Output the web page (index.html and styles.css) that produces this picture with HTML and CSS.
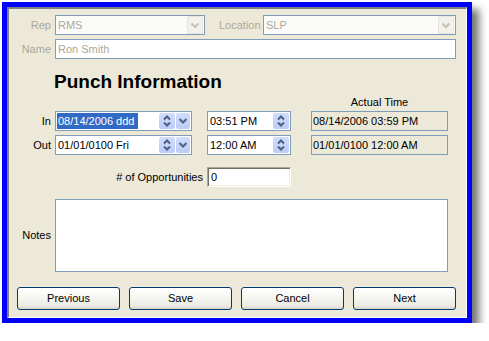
FILE: index.html
```html
<!DOCTYPE html>
<html>
<head>
<meta charset="utf-8">
<link rel="stylesheet" href="styles.css">
</head>
<body>
<div class="window">
  <div class="inner">
    <div class="row">
      <span class="lbl dis">Rep</span>
      <div class="combo rep"><span class="val">RMS</span><span class="dd-dis"><svg width="16" height="18" viewBox="0 0 16 18"><polyline points="4.5,7.5 8,11 11.5,7.5" fill="none" stroke="#C5C2B2" stroke-width="2"/></svg></span></div>
      <span class="lbl loc-lbl dis">Location</span>
      <div class="combo loc"><span class="val">SLP</span><span class="dd-dis"><svg width="16" height="18" viewBox="0 0 16 18"><polyline points="4.5,7.5 8,11 11.5,7.5" fill="none" stroke="#C5C2B2" stroke-width="2"/></svg></span></div>
    </div>
    <div class="row row2">
      <span class="lbl dis">Name</span>
      <div class="textbox name">Ron Smith</div>
    </div>
    <h1 class="heading">Punch Information</h1>
    <div class="prow head">
      <div class="actual-head">Actual Time</div>
    </div>
    <div class="prow">
      <span class="lbl">In</span>
      <div class="cell"><div class="field date"><span class="txt"><span class="sel">08/14/2006 ddd</span></span><span class="spin"><svg width="16" height="16" viewBox="0 0 16 16"><polyline points="5,6.5 8,3.5 11,6.5" fill="none" stroke="#4D6185" stroke-width="2"/><polyline points="5,9.5 8,12.5 11,9.5" fill="none" stroke="#4D6185" stroke-width="2"/></svg></span><span class="dd"><svg width="14" height="16" viewBox="0 0 14 16"><polyline points="3.5,6 7,9.5 10.5,6" fill="none" stroke="#4D6185" stroke-width="2"/></svg></span></div></div>
      <div class="cell"><div class="field time"><span class="txt">03:51 PM</span><span class="spin"><svg width="16" height="16" viewBox="0 0 16 16"><polyline points="5,6.5 8,3.5 11,6.5" fill="none" stroke="#4D6185" stroke-width="2"/><polyline points="5,9.5 8,12.5 11,9.5" fill="none" stroke="#4D6185" stroke-width="2"/></svg></span></div></div>
      <div class="ro">08/14/2006 03:59 PM</div>
    </div>
    <div class="prow out">
      <span class="lbl">Out</span>
      <div class="cell"><div class="field date"><span class="txt">01/01/0100 Fri</span><span class="spin"><svg width="16" height="16" viewBox="0 0 16 16"><polyline points="5,6.5 8,3.5 11,6.5" fill="none" stroke="#4D6185" stroke-width="2"/><polyline points="5,9.5 8,12.5 11,9.5" fill="none" stroke="#4D6185" stroke-width="2"/></svg></span><span class="dd"><svg width="14" height="16" viewBox="0 0 14 16"><polyline points="3.5,6 7,9.5 10.5,6" fill="none" stroke="#4D6185" stroke-width="2"/></svg></span></div></div>
      <div class="cell"><div class="field time"><span class="txt">12:00 AM</span><span class="spin"><svg width="16" height="16" viewBox="0 0 16 16"><polyline points="5,6.5 8,3.5 11,6.5" fill="none" stroke="#4D6185" stroke-width="2"/><polyline points="5,9.5 8,12.5 11,9.5" fill="none" stroke="#4D6185" stroke-width="2"/></svg></span></div></div>
      <div class="ro">01/01/0100 12:00 AM</div>
    </div>
    <div class="prow opps">
      <span class="lbl opps-lbl">#&nbsp;of Opportunities</span>
      <div class="cell"><div class="sunken">0</div></div>
    </div>
    <div class="prow notes">
      <span class="lbl notes-lbl">Notes</span>
      <div class="notes-box"></div>
    </div>
    <div class="buttons">
      <div class="btn">Previous</div>
      <div class="btn">Save</div>
      <div class="btn">Cancel</div>
      <div class="btn">Next</div>
    </div>
  </div>
</div>
</body>
</html>
```

FILE: styles.css
```css
html, body {
  margin: 0;
  padding: 0;
  background: #ffffff;
}
body {
  font-family: "Liberation Sans", Arial, sans-serif;
  font-size: 11px;
  color: #000;
}
.window {
  margin: 2px 0 0 2px;
  width: 470px;
  height: 321px;
  box-sizing: border-box;
  border: 5px solid #0000ff;
  box-shadow: 7px 7px 8px rgba(0, 0, 0, 0.55);
}
.inner {
  height: 100%;
  box-sizing: border-box;
  background: #ECE9D8;
  border-top: 2px solid #808080;
  border-left: 2px solid #808080;
  border-right: 1px solid #ffffff;
  border-bottom: 1px solid #ffffff;
  padding: 6px 10px 0 0;
}
.row {
  display: flex;
  align-items: center;
  height: 20px;
}
.row2 {
  margin-top: 4px;
}
.lbl {
  width: 46px;
  box-sizing: border-box;
  padding-right: 4px;
  text-align: right;
  white-space: nowrap;
  line-height: 13px;
}
.dis {
  color: #ACA899;
}
.combo {
  height: 20px;
  box-sizing: border-box;
  border: 1px solid #7F9DB9;
  background: #FBFBF9;
  display: flex;
  align-items: stretch;
  color: #ACA899;
}
.combo .val {
  flex: 1;
  padding-left: 2px;
  line-height: 18px;
}
.rep {
  width: 150px;
  margin-right: 14px;
}
.loc-lbl {
  width: 44px;
}
.loc {
  flex: 1;
}
.dd-dis {
  width: 16px;
  height: 18px;
  box-sizing: border-box;
  background: #F2F1EC;
  border: 1px solid #E6E4DC;
  border-radius: 2px;
  margin-right: 1px;
}
.dd-dis svg {
  display: block;
  margin: -1px 0 0 -1px;
}
.textbox {
  height: 20px;
  box-sizing: border-box;
  border: 1px solid #7F9DB9;
  background: #ffffff;
  padding-left: 2px;
  line-height: 18px;
}
.name {
  flex: 1;
  color: #ACA899;
}
.heading {
  margin: 12px 0 0 45px;
  font-size: 19px;
  line-height: 22px;
  font-weight: bold;
  font-family: "Liberation Sans", Arial, sans-serif;
}
.prow {
  display: grid;
  grid-template-columns: 46px 152px 104px 137px;
  align-items: center;
}
.head {
  margin-top: 3px;
  height: 15px;
  align-items: start;
}
.actual-head {
  grid-column: 4;
  text-align: center;
  line-height: 13px;
}
.out {
  margin-top: 4px;
}
.opps {
  margin-top: 12px;
}
.notes {
  margin-top: 12px;
}
.field {
  height: 20px;
  box-sizing: border-box;
  border: 1px solid #7F9DB9;
  background: #ffffff;
  padding: 1px;
  display: flex;
  align-items: stretch;
}
.date {
  width: 137px;
}
.time {
  width: 84px;
}
.txt {
  flex: 1;
  line-height: 16px;
  padding-left: 1px;
  white-space: nowrap;
  overflow: hidden;
}
.sel {
  display: inline-block;
  background: #316AC5;
  color: #ffffff;
  padding-right: 4px;
  margin-left: -1px;
  padding-left: 1px;
}
.spin, .dd {
  display: block;
  height: 16px;
  box-sizing: border-box;
  background: linear-gradient(#D3DEFC, #BACBF7);
  border-radius: 2px;
}
.spin {
  width: 16px;
}
.dd {
  width: 14px;
  margin-left: 1px;
}
.spin svg, .dd svg {
  display: block;
}
.ro {
  height: 20px;
  box-sizing: border-box;
  border: 1px solid #7F9DB9;
  background: #ECE9D8;
  padding-left: 1px;
  line-height: 18px;
  white-space: nowrap;
}
.opps-lbl {
  grid-column: 1 / span 2;
  width: auto;
}
.opps .cell {
  grid-column: 3;
}
.sunken {
  width: 84px;
  height: 20px;
  box-sizing: border-box;
  background: #ffffff;
  border-top: 1px solid #ACA899;
  border-left: 1px solid #ACA899;
  border-right: 1px solid #ffffff;
  border-bottom: 1px solid #ffffff;
  box-shadow: inset 1px 1px 0 #716F64, inset -1px -1px 0 #F1EFE2;
  padding-left: 3px;
  line-height: 18px;
}
.notes-lbl {
  align-self: center;
}
.notes-box {
  grid-column: 2 / span 3;
  height: 73px;
  box-sizing: border-box;
  border: 1px solid #7F9DB9;
  background: #ffffff;
}
.buttons {
  display: flex;
  gap: 9px;
  margin: 15px 0 0 8px;
}
.btn {
  width: 103px;
  height: 23px;
  box-sizing: border-box;
  border: 1px solid #003C74;
  border-radius: 3px;
  background: linear-gradient(#FFFFFF 0%, #F5F5F1 50%, #EBEAE3 85%, #D8D3C8 100%);
  text-align: center;
  line-height: 21px;
}
```
